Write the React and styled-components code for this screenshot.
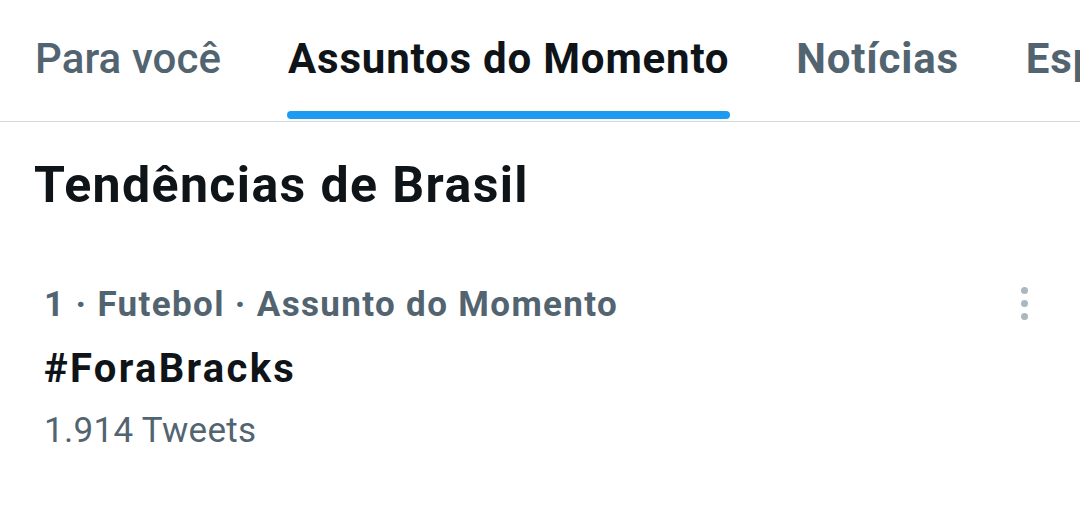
import React from "react";
import styled, { createGlobalStyle } from "styled-components";

const Global = createGlobalStyle`
  html, body { margin: 0; padding: 0; background: #fff; }
  body { font-family: Roboto, "Noto Sans", Arial, sans-serif; -webkit-font-smoothing: antialiased; }
  #root { width: 1080px; height: 506px; overflow: hidden; }
`;

const Page = styled.div`
  width: 1080px;
  height: 506px;
  background: #fff;
  display: flex;
  flex-direction: column;
`;

const TabBar = styled.nav`
  display: flex;
  align-items: stretch;
  height: 121px;
  padding-left: 35px;
  gap: 67px;
  border-bottom: 1.5px solid #cfd9de;
  white-space: nowrap;
  overflow: hidden;
`;

const Tab = styled.div`
  position: relative;
  display: flex;
  align-items: flex-start;
  padding-top: 34px;
  font-size: 42px;
  line-height: 50px;
  font-weight: ${(p) => (p.$regular ? 500 : 700)};
  letter-spacing: ${(p) => (p.$regular ? "0.1px" : "0.8px")};
  color: ${(p) => (p.$active ? "#0f1419" : "#536471")};
  flex-shrink: 0;
`;

const Indicator = styled.span`
  position: absolute;
  left: -1px;
  right: -1px;
  bottom: 2px;
  height: 8px;
  border-radius: 4px;
  background: #1d9bf0;
`;

const Heading = styled.h2`
  margin: 0;
  padding: 33px 0 0 34px;
  font-size: 50px;
  line-height: 60px;
  font-weight: 700;
  letter-spacing: 1.4px;
  color: #0f1419;
`;

const Trend = styled.div`
  display: flex;
  justify-content: space-between;
  padding: 69px 52px 0 44px;
`;

const TrendText = styled.div`
  display: flex;
  flex-direction: column;
`;

const Meta = styled.div`
  font-size: 35px;
  line-height: 42px;
  font-weight: 700;
  letter-spacing: 1.35px;
  color: #536471;
`;

const Tag = styled.div`
  margin-top: 19px;
  font-size: 40px;
  line-height: 48px;
  font-weight: 700;
  letter-spacing: 2.3px;
  color: #0f1419;
`;

const Count = styled.div`
  margin-top: 17px;
  font-size: 35px;
  line-height: 42px;
  font-weight: 400;
  letter-spacing: 0.3px;
  color: #536471;
`;

const More = styled.div`
  display: flex;
  flex-direction: column;
  gap: 6px;
  padding-top: 3px;
`;

const Dot = styled.span`
  width: 7px;
  height: 7px;
  border-radius: 50%;
  background: #aab8c2;
`;

export default function App() {
  return (
    <Page>
      <Global />
      <TabBar>
        <Tab $regular>Para você</Tab>
        <Tab $active>
          Assuntos do Momento
          <Indicator />
        </Tab>
        <Tab>Notícias</Tab>
        <Tab>Esportes</Tab>
      </TabBar>
      <Heading>Tendências de Brasil</Heading>
      <Trend>
        <TrendText>
          <Meta>1 · Futebol · Assunto do Momento</Meta>
          <Tag>#ForaBracks</Tag>
          <Count>1.914 Tweets</Count>
        </TrendText>
        <More>
          <Dot />
          <Dot />
          <Dot />
        </More>
      </Trend>
    </Page>
  );
}
